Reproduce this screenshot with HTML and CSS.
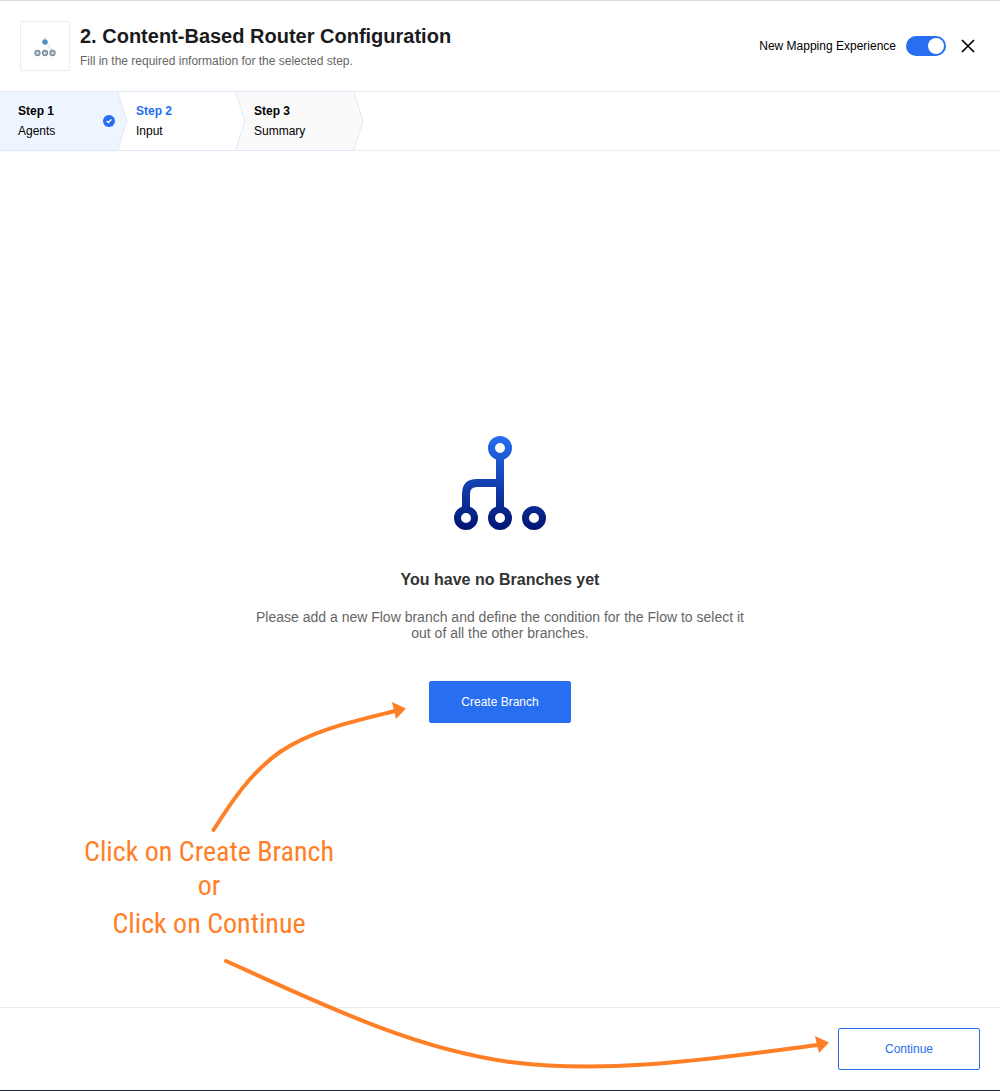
FILE: index.html
```html
<!DOCTYPE html>
<html lang="en">
<head>
<meta charset="utf-8">
<meta name="viewport" content="width=device-width, initial-scale=1">
<title>Content-Based Router Configuration</title>
<link rel="stylesheet" href="styles.css">
</head>
<body>
<div class="page">
  <header class="header">
    <div class="logo">
      <svg width="26" height="22" viewBox="0 0 26 22" aria-hidden="true">
        <path d="M13 2v4M13 6l7 9" stroke="#d3d8dd" stroke-width="1.3" stroke-dasharray="2 1" fill="none"/>
        <circle cx="13" cy="7" r="2.3" fill="#3f9ae0" stroke="#5c7f9e"/>
        <g fill="#b9d2e3" stroke="#7f8a94" stroke-width="1.3">
          <circle cx="5.500" cy="18" r="2.500"/><circle cx="13" cy="18" r="2.500"/><circle cx="20.500" cy="18" r="2.500"/>
        </g>
      </svg>
    </div>
    <div class="heading">
      <h1 class="title">2. Content-Based Router Configuration</h1>
      <p class="subtitle">Fill in the required information for the selected step.</p>
    </div>
    <label class="mapping">New Mapping Experience
      <input class="switch" type="checkbox" role="switch" checked>
    </label>
    <button class="close" type="button" aria-label="Close">
      <svg width="14" height="14" viewBox="0 0 14 14"><path d="M1 1l12 12M13 1L1 13" stroke="#000" stroke-width="1.7"/></svg>
    </button>
  </header>

  <ol class="steps">
    <li class="step step-done">
      <div><strong class="step-name">Step 1</strong><span>Agents</span></div>
      <svg class="check" width="12" height="12" viewBox="0 0 12 12" aria-hidden="true"><circle cx="6" cy="6" r="6" fill="#276ef1"/><path d="M3.700 6l1.600 1.600L8.400 4.500" stroke="#fff" stroke-width="1.400" fill="none"/></svg>
      <svg class="tip" width="11" height="60" viewBox="0 0 11 60" aria-hidden="true"><path d="M.5 .5L10 30L.5 59.500"/></svg>
    </li>
    <li class="step step-current">
      <div><strong class="step-name">Step 2</strong><span>Input</span></div>
      <svg class="tip" width="11" height="60" viewBox="0 0 11 60" aria-hidden="true"><path d="M.5 .5L10 30L.5 59.500"/></svg>
    </li>
    <li class="step step-next">
      <div><strong class="step-name">Step 3</strong><span>Summary</span></div>
      <svg class="tip" width="11" height="60" viewBox="0 0 11 60" aria-hidden="true"><path d="M.5 .5L10 30L.5 59.500"/></svg>
    </li>
  </ol>

  <main class="content">
    <svg width="92" height="94" viewBox="0 0 92 94" aria-hidden="true">
      <defs><linearGradient id="blue" gradientUnits="userSpaceOnUse" x1="0" y1="0" x2="0" y2="94"><stop offset="0" stop-color="#276ef1"/><stop offset="1" stop-color="#001472"/></linearGradient></defs>
      <g fill="none" stroke="url(#blue)">
        <g stroke-width="7"><circle cx="46" cy="12" r="8.500"/><circle cx="12" cy="82" r="8.500"/><circle cx="46" cy="82" r="8.500"/><circle cx="80" cy="82" r="8.500"/></g>
        <path d="M46 22V72M46 47H23Q12 47 12 58V72" stroke-width="8"/>
      </g>
    </svg>
    <h2 class="empty-title">You have no Branches yet</h2>
    <p class="empty-text">Please add a new Flow branch and define the condition for the Flow to select it out of all the other branches.</p>
    <button class="button button-primary" type="button">Create Branch</button>
  </main>

  <footer class="footer">
    <button class="button button-outline" type="button">Continue</button>
  </footer>

  <aside class="notes">
    <svg class="arrows" width="750" height="370" viewBox="85 701 750 370" aria-hidden="true">
      <g fill="none" stroke="#ff7f27" stroke-width="4" stroke-linecap="round">
        <path d="M213.500 830C230 804 250 773 280 752C312 730 355 721 397 710.500"/>
        <path d="M226 961C330 1008 415 1049 510 1062C612 1075 715 1058 818 1045"/>
      </g>
      <path d="M392 702L406 708.500L396 719L394 711zM815 1036L829 1042.500L819 1053L817 1045z" fill="#ff7f27"/>
    </svg>
    <div class="note">
      <p>Click on Create Branch</p>
      <p>or</p>
      <p>Click on Continue</p>
    </div>
  </aside>
</div>
</body>
</html>
```
FILE: styles.css
```css
* { box-sizing: border-box; }

body {
  margin: 0;
  background: #fff;
  color: #000;
  font: 12px/20px "Liberation Sans", Arial, sans-serif;
}

h1, h2, p, ol { margin: 0; padding: 0; }
button { font: inherit; cursor: pointer; }

.page {
  position: relative;
  display: flex;
  flex-direction: column;
  min-height: 100vh;
  border-top: 1px solid #d9dade;
  border-bottom: 1px solid #1b2536;
}

/* Header */
.header {
  display: flex;
  align-items: center;
  gap: 10px;
  padding: 20px;
  border-bottom: 1px solid #ebebeb;
}

.logo {
  display: grid;
  place-items: center;
  width: 50px;
  height: 50px;
  border: 1px solid #ebebeb;
  border-radius: 2px;
}

.heading { flex: 1; }
.title { color: #1b1b1d; font-size: 20px; line-height: 24px; }
.subtitle { margin-top: 5px; color: #666; line-height: 16px; }
.mapping { display: flex; align-items: center; gap: 10px; }

.switch {
  appearance: none;
  display: flex;
  justify-content: flex-end;
  width: 40px;
  height: 20px;
  margin: 0;
  padding: 2px;
  border-radius: 10px;
  background: #276ef1;
}

.switch::before {
  content: "";
  width: 16px;
  height: 16px;
  border-radius: 50%;
  background: #fff;
}

.close {
  display: grid;
  place-items: center;
  width: 24px;
  height: 24px;
  padding: 0;
  border: 0;
  background: none;
}

/* Steps */
.steps {
  display: flex;
  margin-top: -1px;
  border-bottom: 1px solid #ebebeb;
  list-style: none;
}

.step {
  position: relative;
  display: flex;
  align-items: center;
  justify-content: space-between;
  width: 118px;
  margin-bottom: -1px;
  padding: 9px 3px 9px 18px;
  border: solid #e0e7f6;
  border-width: 1px 0;
}

.step-name { display: block; }
.step-done { z-index: 3; background: #eef5ff; }
.step-current { z-index: 2; background: #fff; }
.step-current .step-name { color: #276ef1; }
.step-next { z-index: 1; background: #fafafa; }

.tip { position: absolute; top: -1px; left: calc(100% - 1px); stroke: #e0e7f6; }
.step-done .tip { fill: #eef5ff; }
.step-current .tip { fill: #fff; }
.step-next .tip { fill: #fafafa; }

/* Empty state */
.content {
  flex: 1;
  display: flex;
  flex-direction: column;
  align-items: center;
  justify-content: center;
  padding: 21px 20px 20px;
  text-align: center;
}

.empty-title { margin-top: 40px; color: #333; font-size: 16px; line-height: 20px; }
.empty-text { max-width: 500px; margin: 19px 0 40px; color: #666; font-size: 14px; line-height: 16px; }

.button {
  width: 142px;
  height: 42px;
  border: 1px solid #276ef1;
  border-radius: 2px;
}

.button-primary { background: #276ef1; color: #fff; }
.button-outline { background: #fff; color: #276ef1; }

.footer {
  display: flex;
  justify-content: flex-end;
  padding: 20px;
  border-top: 1px solid #ebebeb;
}

/* Hand-drawn notes that lie over the page */
.notes { color: #ff7f27; pointer-events: none; }
.arrows { position: absolute; z-index: 4; left: 85px; bottom: 19px; }

.note {
  position: absolute;
  left: 69px;
  bottom: 149px;
  width: 280px;
  font: 28px/34px "Roboto Condensed", "Arial Narrow", "Liberation Sans", sans-serif;
  text-align: center;
}

.note p:last-child { margin-top: 4px; }
```
